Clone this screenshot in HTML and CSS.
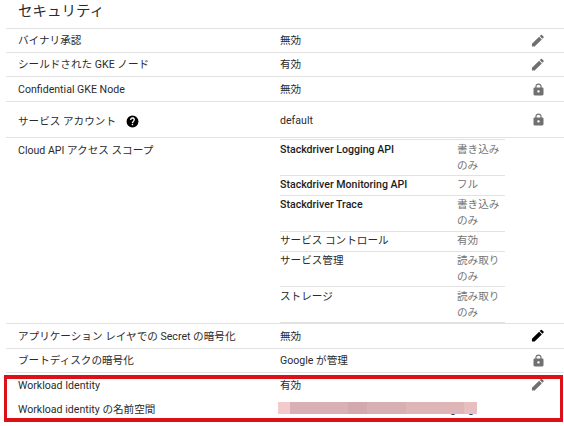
FILE: index.html
```html
<!DOCTYPE html>
<html lang="ja">
<head>
<meta charset="utf-8">
<title>セキュリティ</title>
<link rel="stylesheet" href="styles.css">
</head>
<body>
<svg class="defs" width="0" height="0">
  <symbol id="pencil" viewBox="0 0 24 24"><path d="M3 16.800V21h4.200L18.300 9.900l-4.200-4.200L3 16.800zM20.900 7.300a1.200 1.200 0 0 0 0-1.700l-2.500-2.500a1.200 1.200 0 0 0-1.700 0l-1.700 1.700 4.200 4.200 1.700-1.700z"/></symbol>
  <symbol id="lock" viewBox="0 0 24 24" preserveAspectRatio="none"><path d="M18 8h-1V6c0-2.760-2.240-5-5-5S7 3.240 7 6v2H6c-1.100 0-2 .9-2 2v10c0 1.100.9 2 2 2h12c1.100 0 2-.9 2-2V10c0-1.100-.9-2-2-2zm-6 9c-1.100 0-2-.9-2-2s.9-2 2-2 2 .9 2 2-.9 2-2 2zm3.100-9H8.900V6c0-1.710 1.390-3.100 3.100-3.100s3.100 1.390 3.100 3.100v2z"/></symbol>
  <symbol id="help" viewBox="0 0 24 24"><path d="M12 1a11 11 0 1 0 0 22 11 11 0 0 0 0-22zm1.200 18h-2.500v-2.500h2.500V19zm2.300-7.700-1 1c-.9.900-1.300 1.500-1.300 3h-2.500v-.7c0-1.100.5-2.100 1.200-2.800l1.400-1.400a2 2 0 1 0-3.400-1.400H7.500a4.500 4.500 0 1 1 8 2.300z"/></symbol>
</svg>
<main class="panel">
  <h1 class="title">セキュリティ</h1>
  <div class="row"><span class="label">バイナリ承認</span><span class="value">無効</span><svg class="icon"><use href="#pencil"/></svg></div>
  <div class="row"><span class="label">シールドされた GKE ノード</span><span class="value">有効</span><svg class="icon"><use href="#pencil"/></svg></div>
  <div class="row"><span class="label">Confidential GKE Node</span><span class="value">無効</span><svg class="icon lock"><use href="#lock"/></svg></div>
  <div class="row account"><span class="label">サービス アカウント<svg class="help"><use href="#help"/></svg></span><span class="value">default</span><svg class="icon lock"><use href="#lock"/></svg></div>
  <div class="row scopes">
    <span class="label">Cloud API アクセス スコープ</span>
    <div class="scope-list">
      <div class="scope tall"><b>Stackdriver Logging API</b><span>書き込み<br>のみ</span></div>
      <div class="scope"><b>Stackdriver Monitoring API</b><span>フル</span></div>
      <div class="scope tall"><b>Stackdriver Trace</b><span>書き込み<br>のみ</span></div>
      <div class="scope"><i>サービス コントロール</i><span>有効</span></div>
      <div class="scope tall"><i>サービス管理</i><span>読み取り<br>のみ</span></div>
      <div class="scope tall"><i>ストレージ</i><span>読み取り<br>のみ</span></div>
    </div>
  </div>
  <div class="row"><span class="label">アプリケーション レイヤでの Secret の暗号化</span><span class="value">無効</span><svg class="icon active"><use href="#pencil"/></svg></div>
  <div class="row"><span class="label">ブートディスクの暗号化</span><span class="value">Google が管理</span><svg class="icon lock"><use href="#lock"/></svg></div>
  <div class="row"><span class="label">Workload Identity</span><span class="value">有効</span><svg class="icon"><use href="#pencil"/></svg></div>
  <div class="row namespace"><span class="label">Workload identity の名前空間</span><span class="value masked">goog<span class="mask"></span></span></div>
  <div class="highlight"></div>
</main>
</body>
</html>
```
FILE: styles.css
```css
* { box-sizing: border-box; }
body {
  margin: 0;
  background: #fff;
  color: #2b2b2b;
  font: 10.6px/16px Roboto, "Noto Sans CJK JP", sans-serif;
  overflow: hidden;
}
.defs { position: absolute; }
.panel { position: relative; height: 426px; padding-left: 6px; }
.title {
  height: 27.7px;
  margin: 0;
  padding-left: 12px;
  font-size: 14.5px;
  font-weight: 400;
  line-height: 23px;
}
.row {
  display: grid;
  grid-template-columns: 262px 251px 14px;
  align-items: center;
  height: 24.4px;
  padding-left: 12px;
  border-top: 1px solid #e2e2e2;
  white-space: nowrap;
}
.label, .value { padding-top: 1.4px; }
.account { height: 36.2px; }
.account .label { display: flex; align-items: center; padding-top: 5px; }
.account .value { padding-top: 2.5px; }
.help { width: 13px; height: 13px; margin-left: 10px; fill: #000; }
.icon { width: 15.5px; height: 15.5px; fill: #707070; justify-self: center; }
.lock { width: 15px; height: 13.5px; margin-top: 1px; }
.active { fill: #000; }
.scopes { height: 186.4px; align-items: start; }
.scopes > .label { padding-top: 4.5px; }
.scope-list {
  width: 225px;
  margin-top: 1.3px;
  border-bottom: 1px solid #e2e2e2;
}
.scope {
  display: grid;
  grid-template-columns: 177px 48px;
  height: 20px;
  padding-top: 1.5px;
  border-top: 1px solid #e2e2e2;
}
.tall { height: 35.6px; }
.scope b { color: #1c1c1c; font-weight: 500; }
.scope i { font-style: normal; }
.scope span { color: #757575; }
.namespace { border-top-color: transparent; }
.masked { position: relative; padding-left: 170px; }
.mask {
  position: absolute;
  left: -2px;
  top: 1px;
  width: 199px;
  height: 12px;
  background: linear-gradient(90deg, #f4cbcd 0 12px, #d9b0b3 12px 70px, #d4a9ad 70px 89px, #d8afb2 89px 128px, #dfb6b8 128px 186px, #e8bfc1 186px);
}
.highlight {
  position: absolute;
  left: 4px;
  top: 375px;
  width: 559px;
  height: 47px;
  border: solid #dc1016;
  border-width: 4px 3px;
}
```
